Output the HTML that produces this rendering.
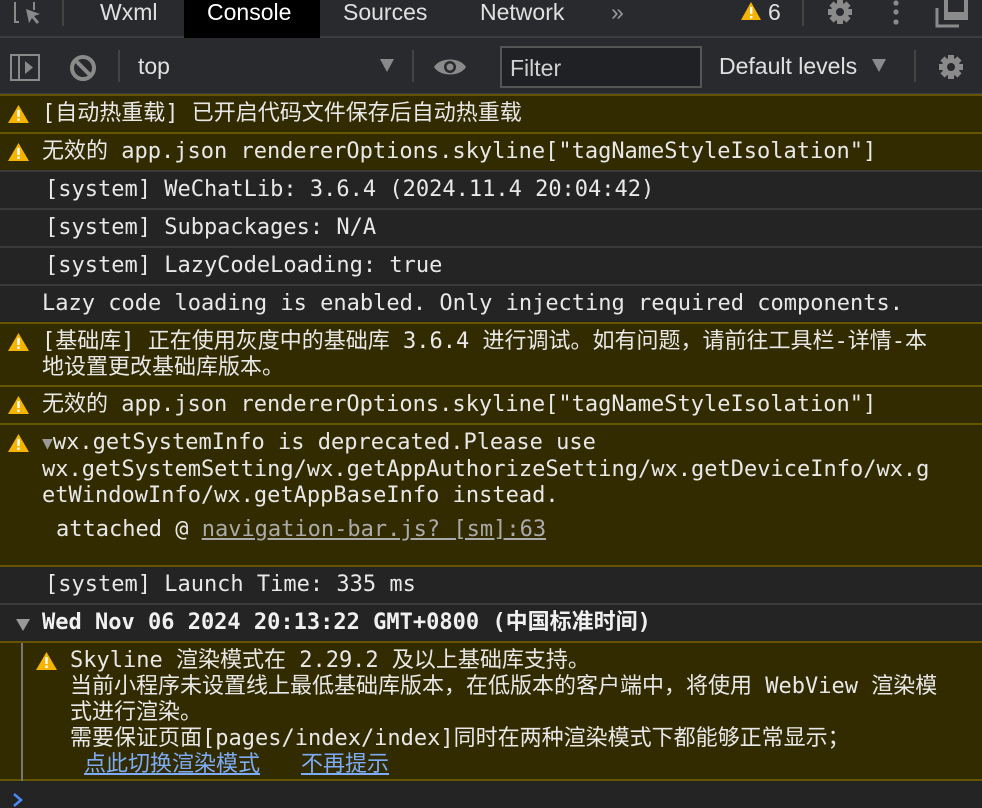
<!DOCTYPE html>
<html><head><meta charset="utf-8"><style>
*{margin:0;padding:0;box-sizing:border-box}
body{width:982px;height:808px;background:#242424;overflow:hidden;position:relative;font-family:"DejaVu Sans Mono","Noto Sans CJK SC",monospace;color:#e8e8e8}
.ui{font-family:"Liberation Sans","DejaVu Sans",sans-serif}
.tabs{position:absolute;left:0;top:0;width:982px;height:38px;background:#292a2d;border-bottom:2px solid #3d3d40}
.tab{position:absolute;top:-1px;height:38px;font-size:23px;line-height:26px;color:#e0e0e0}
.tb{position:absolute;left:0;top:38px;width:982px;height:58px;background:#292a2d;border-bottom:3px solid #3c3c3f}
.row{position:absolute;left:0;width:982px;font-size:22px;line-height:26px;white-space:nowrap}
.w{background:#332b00;border-top:2px solid #665500}
.n{background:#242424;border-top:2px solid #3a3a3a}
.t{position:absolute;left:42px;top:5px}
.ic{position:absolute;left:8px;top:8px}
.sep{position:absolute;width:2px;background:#444}
a{color:#7cacf8;text-decoration:underline}
</style></head><body>
<div class="tabs ui">
<svg style="position:absolute;left:12px;top:0" width="32" height="28" viewBox="0 0 32 28"><path d="M3 2v20h4M22 10V2" stroke="#8a8a8a" stroke-width="2" fill="none"/><path d="M14 9l14 5-6 2 5 6-2 2-5-6-3 5z" fill="#8a8a8a"/></svg>
<div class="sep" style="left:62px;top:0;height:26px"></div>
<div class="tab" style="left:100px">Wxml</div>
<div style="position:absolute;left:184px;top:0;width:136px;height:38px;background:#000"></div>
<div class="tab" style="left:207px;color:#fff">Console</div>
<div class="tab" style="left:343px">Sources</div>
<div class="tab" style="left:480px">Network</div>
<div class="tab" style="left:611px;color:#999">»</div>
<svg style="position:absolute;left:740px;top:1px" width="22" height="20" viewBox="0 0 22 20"><path d="M11 1L21 19H1z" fill="#f4b400"/><rect x="10" y="6" width="2.4" height="7" fill="#fff"/><rect x="10" y="15" width="2.4" height="2.4" fill="#fff"/></svg>
<div class="tab" style="left:768px">6</div>
<div class="sep" style="left:802px;top:0;height:26px"></div>
<svg style="position:absolute;left:825px;top:0" width="30" height="26" viewBox="0 0 30 26"><g fill="#8a8a8a"><circle cx="15" cy="12" r="9"/><rect x="12" y="0" width="6" height="24"/><rect x="3" y="9" width="24" height="6"/><rect x="12" y="0" width="6" height="24" transform="rotate(45 15 12)"/><rect x="12" y="0" width="6" height="24" transform="rotate(-45 15 12)"/></g><circle cx="15" cy="12" r="4" fill="#292a2d"/></svg>
<svg style="position:absolute;left:890px;top:0" width="12" height="28"><circle cx="6" cy="3" r="2.6" fill="#8a8a8a"/><circle cx="6" cy="12" r="2.6" fill="#8a8a8a"/><circle cx="6" cy="22" r="2.6" fill="#8a8a8a"/></svg>
<svg style="position:absolute;left:935px;top:0" width="36" height="28"><path d="M2 8v18h22" stroke="#8a8a8a" stroke-width="3" fill="none"/><rect x="9" y="0" width="24" height="20" fill="#8a8a8a"/><rect x="13" y="0" width="16" height="12" fill="#292a2d"/></svg>
</div>
<div class="tb ui">
<svg style="position:absolute;left:10px;top:16px" width="30" height="28"><rect x="1" y="1" width="28" height="25" stroke="#8a8a8a" stroke-width="2" fill="none"/><rect x="8" y="1" width="2" height="25" fill="#8a8a8a"/><path d="M15 7l8 6.5-8 6.5z" fill="#8a8a8a"/></svg>
<svg style="position:absolute;left:69px;top:16px" width="28" height="28"><circle cx="14" cy="14" r="11" stroke="#8a8a8a" stroke-width="4" fill="none"/><path d="M6 6l16 16" stroke="#8a8a8a" stroke-width="4"/></svg>
<div class="sep" style="left:118px;top:12px;height:32px"></div>
<div style="position:absolute;left:138px;top:15px;font-size:23px;color:#e0e0e0">top</div>
<svg style="position:absolute;left:380px;top:21px" width="14" height="13"><path d="M0 0h14L7 13z" fill="#8a8a8a"/></svg>
<div class="sep" style="left:412px;top:12px;height:32px"></div>
<svg style="position:absolute;left:433px;top:18px" width="34" height="22"><path d="M1 11C7 1 27 1 33 11 27 21 7 21 1 11z" fill="#8a8a8a"/><circle cx="17" cy="11" r="6" fill="#292a2d"/><circle cx="17" cy="11" r="3.5" fill="#8a8a8a"/></svg>
<div style="position:absolute;left:500px;top:8px;width:202px;height:42px;border:2px solid #555;background:#202124"></div>
<div style="position:absolute;left:510px;top:17px;font-size:23px;color:#d0d0d0">Filter</div>
<div style="position:absolute;left:719px;top:15px;font-size:23px;color:#e0e0e0">Default levels</div>
<svg style="position:absolute;left:872px;top:21px" width="14" height="13"><path d="M0 0h14L7 13z" fill="#8a8a8a"/></svg>
<div class="sep" style="left:914px;top:12px;height:32px"></div>
<svg style="position:absolute;left:936px;top:14px" width="30" height="30" viewBox="0 0 30 26"><g fill="#8a8a8a"><circle cx="15" cy="13" r="9"/><rect x="12" y="1" width="6" height="24"/><rect x="3" y="10" width="24" height="6"/><rect x="12" y="1" width="6" height="24" transform="rotate(45 15 13)"/><rect x="12" y="1" width="6" height="24" transform="rotate(-45 15 13)"/></g><circle cx="15" cy="13" r="4" fill="#292a2d"/></svg>
</div>

<svg width="0" height="0" style="position:absolute"><defs><g id="wi"><path d="M10.5 1L21 19H0z" fill="#f4b400"/><rect x="9.3" y="6" width="2.4" height="7" fill="#fff"/><rect x="9.3" y="14.5" width="2.4" height="2.4" fill="#fff"/></g></defs></svg>

<div class="row w" style="top:94px;height:39px"><svg class="ic" width="21" height="20"><use href="#wi"/></svg><div class="t">[自动热重载] 已开启代码文件保存后自动热重载</div></div>
<div class="row w" style="top:132px;height:39px"><svg class="ic" width="21" height="20"><use href="#wi"/></svg><div class="t">无效的 app.json rendererOptions.skyline["tagNameStyleIsolation"]</div></div>
<div class="row n" style="top:170px;height:39px"><div class="t" style="left:45px">[system] WeChatLib: 3.6.4 (2024.11.4 20:04:42)</div></div>
<div class="row n" style="top:208px;height:39px"><div class="t" style="left:45px">[system] Subpackages: N/A</div></div>
<div class="row n" style="top:246px;height:39px"><div class="t" style="left:45px">[system] LazyCodeLoading: true</div></div>
<div class="row n" style="top:284px;height:39px"><div class="t">Lazy code loading is enabled. Only injecting required components.</div></div>
<div class="row w" style="top:322px;height:63px"><svg class="ic" width="21" height="20"><use href="#wi"/></svg><div class="t">[基础库] 正在使用灰度中的基础库 3.6.4 进行调试。如有问题，请前往工具栏-详情-本<br>地设置更改基础库版本。</div></div>
<div class="row w" style="top:385px;height:38px"><svg class="ic" width="21" height="20"><use href="#wi"/></svg><div class="t">无效的 app.json rendererOptions.skyline["tagNameStyleIsolation"]</div></div>
<div class="row w" style="top:423px;height:142px"><svg class="ic" width="21" height="20"><use href="#wi"/></svg><div class="t"><span style="color:#999;font-size:18px">▼</span>wx.getSystemInfo is deprecated.Please use<br>wx.getSystemSetting/wx.getAppAuthorizeSetting/wx.getDeviceInfo/wx.g<br>etWindowInfo/wx.getAppBaseInfo instead.<br><div style="margin-top:8px;margin-left:14px">attached @ <span style="color:#aaa;text-decoration:underline">navigation-bar.js? [sm]:63</span></div></div></div>
<div class="row n" style="top:565px;height:38px;border-top-color:#665500"><div class="t" style="left:45px">[system] Launch Time: 335 ms</div></div>
<div class="row n" style="top:603px;height:38px"><svg style="position:absolute;left:16px;top:14px" width="14" height="12"><path d="M0 0h14L7 12z" fill="#999"/></svg><div class="t" style="font-weight:bold;color:#f0f0f0">Wed Nov 06 2024 20:13:22 GMT+0800 (中国标准时间)</div></div>
<div class="row w" style="top:641px;height:140px;border-bottom:2px solid #665500"><div style="position:absolute;left:21px;top:0;width:2px;height:138px;background:#777"></div><svg class="ic" style="left:36px;top:8px" width="21" height="20"><use href="#wi"/></svg><div class="t" style="left:70px">Skyline 渲染模式在 2.29.2 及以上基础库支持。<br>当前小程序未设置线上最低基础库版本，在低版本的客户端中，将使用 WebView 渲染模<br>式进行渲染。<br>需要保证页面[pages/index/index]同时在两种渲染模式下都能够正常显示；<br><a style="margin-left:14px">点此切换渲染模式</a><a style="margin-left:41px">不再提示</a></div></div>
<svg style="position:absolute;left:12px;top:792px" width="12" height="16"><path d="M2 2l7 6-7 6" stroke="#4a8af4" stroke-width="2.5" fill="none"/></svg>
</body></html>
